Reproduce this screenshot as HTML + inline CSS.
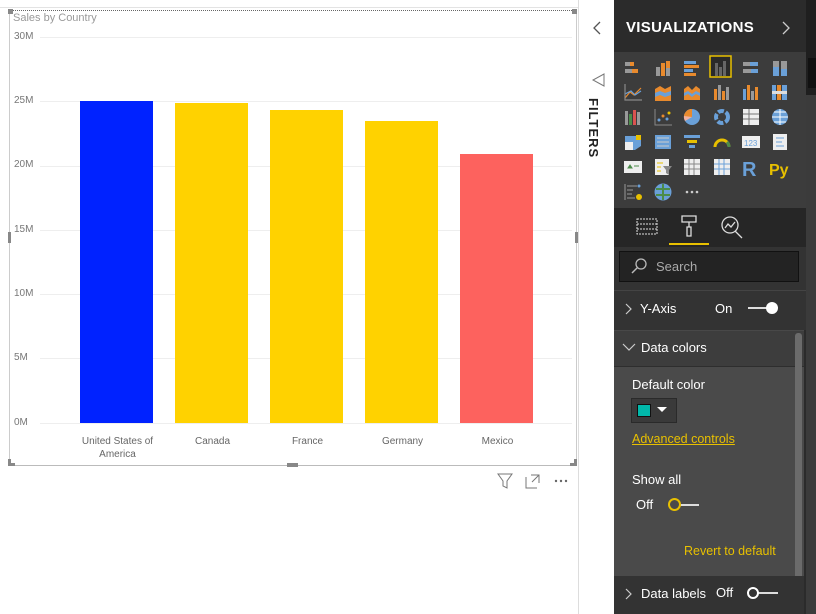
<!DOCTYPE html>
<html><head><style>
*{margin:0;padding:0;box-sizing:border-box}
body{width:816px;height:614px;position:relative;background:#fff;font-family:"Liberation Sans",sans-serif;overflow:hidden}
.a{position:absolute}
.yl{position:absolute;left:14px;font-size:10px;color:#777}
.gl{position:absolute;left:40px;width:532px;height:1px;background:#eee}
.bar{position:absolute;width:73px}
.xl{position:absolute;font-size:10px;color:#666;text-align:center;width:95px;line-height:13px}
.ic{position:absolute;width:18px;height:18px}
.pt{color:#fff;font-size:13px;position:absolute}
</style></head><body>
<div class="a" style="left:0;top:7px;width:578px;height:0;border-top:1px solid #e3e3e3"></div>
<div class="a" style="left:9px;top:10px;width:567px;height:0;border-top:1px dotted #666"></div>
<div class="a" style="left:9px;top:10px;width:1px;height:455px;background:#ccc"></div>
<div class="a" style="left:576px;top:10px;width:1px;height:455px;background:#ccc"></div>
<div class="a" style="left:9px;top:465px;width:568px;height:1px;background:#bbb"></div>
<div class="a" style="left:578px;top:0;width:1px;height:614px;background:#ddd"></div>
<div class="a" style="left:8px;top:9px;width:5px;height:5px;background:#888"></div>
<div class="a" style="left:572px;top:9px;width:5px;height:5px;background:#888"></div>
<div class="a" style="left:8px;top:459px;width:3px;height:7px;background:#888"></div><div class="a" style="left:8px;top:463px;width:7px;height:3px;background:#888"></div>
<div class="a" style="left:574px;top:459px;width:3px;height:7px;background:#888"></div><div class="a" style="left:570px;top:463px;width:7px;height:3px;background:#888"></div>
<div class="a" style="left:287px;top:463px;width:11px;height:4px;background:#888"></div>
<div class="a" style="left:8px;top:232px;width:3px;height:11px;background:#888"></div>
<div class="a" style="left:575px;top:232px;width:3px;height:11px;background:#888"></div>
<div class="a" style="left:13px;top:12px;font-size:11px;color:#999">Sales by Country</div>
<div class="yl" style="top:31px">30M</div><div class="gl" style="top:37px"></div>
<div class="yl" style="top:95px">25M</div><div class="gl" style="top:101px"></div>
<div class="yl" style="top:159px">20M</div><div class="gl" style="top:166px"></div>
<div class="yl" style="top:224px">15M</div><div class="gl" style="top:230px"></div>
<div class="yl" style="top:288px">10M</div><div class="gl" style="top:294px"></div>
<div class="yl" style="top:352px">5M</div><div class="gl" style="top:358px"></div>
<div class="yl" style="top:417px">0M</div><div class="gl" style="top:423px"></div>
<div class="bar" style="left:80px;top:101px;height:322px;background:#0022ff"></div>
<div class="bar" style="left:175px;top:103px;height:320px;background:#ffd200"></div>
<div class="bar" style="left:270px;top:110px;height:313px;background:#ffd200"></div>
<div class="bar" style="left:365px;top:121px;height:302px;background:#ffd200"></div>
<div class="bar" style="left:460px;top:154px;height:269px;background:#fd625e"></div>
<div class="xl" style="left:70px;top:435px">United States of America</div>
<div class="xl" style="left:165px;top:435px">Canada</div>
<div class="xl" style="left:260px;top:435px">France</div>
<div class="xl" style="left:355px;top:435px">Germany</div>
<div class="xl" style="left:450px;top:435px">Mexico</div>
<svg class="a" style="left:496px;top:472px" width="80" height="18"><path d="M2 2h14l-5 7v7l-4-2v-5z" fill="none" stroke="#777"/><path d="M30 5v11h11M35 3h8v8M43 3l-7 7" fill="none" stroke="#777"/><circle cx="60" cy="9" r="1.2" fill="#666"/><circle cx="65" cy="9" r="1.2" fill="#666"/><circle cx="70" cy="9" r="1.2" fill="#666"/></svg>
<svg class="a" style="left:590px;top:20px" width="16" height="16"><path d="M10 2l-6 6 6 6" fill="none" stroke="#555" stroke-width="1.3"/></svg>
<svg class="a" style="left:590px;top:72px" width="16" height="16"><path d="M14 2v12L3 8z" fill="none" stroke="#777"/></svg>
<div class="a" style="left:586px;top:98px;font-size:13px;font-weight:bold;color:#222;writing-mode:vertical-rl;letter-spacing:1px">FILTERS</div>
<div class="a" style="left:614px;top:0;width:192px;height:614px;background:#2b2b2b"></div>
<div class="a" style="left:806px;top:0;width:10px;height:614px;background:#1f1f1f"></div>
<div class="a" style="left:808px;top:58px;width:8px;height:30px;background:#111"></div>
<div class="a" style="left:806px;top:95px;width:10px;height:519px;background:#3b3b3b"></div>
<div class="a" style="left:626px;top:19px;color:#fff;font-size:15px;font-weight:bold;letter-spacing:.3px">VISUALIZATIONS</div>
<svg class="a" style="left:780px;top:20px" width="12" height="16"><path d="M3 2l6 6-6 6" fill="none" stroke="#ccc" stroke-width="1.3"/></svg>
<div class="a" style="left:614px;top:52px;width:192px;height:156px;background:#3c3c3c"></div>
<div class="a" style="left:614px;top:208px;width:192px;height:39px;background:#262626"></div>
<div class="a" style="left:614px;top:247px;width:192px;height:83px;background:#333"></div>
<div class="a" style="left:619px;top:251px;width:180px;height:31px;background:#232323;border:1px solid #111"></div>
<svg class="a" style="left:630px;top:257px" width="18" height="18"><circle cx="11" cy="7" r="5" fill="none" stroke="#bbb" stroke-width="1.3"/><path d="M7 11l-5 5" stroke="#bbb" stroke-width="1.5"/></svg>
<div class="a" style="left:656px;top:259px;color:#aaa;font-size:13px">Search</div>
<div class="a" style="left:614px;top:290px;width:192px;height:1px;background:#444"></div>
<svg class="a" style="left:624px;top:302px" width="10" height="14"><path d="M2 2l5 5-5 5" fill="none" stroke="#ccc" stroke-width="1.2"/></svg>
<div class="pt" style="left:640px;top:301px">Y-Axis</div>
<div class="pt" style="left:715px;top:301px">On</div>
<div class="a" style="left:748px;top:307px;width:22px;height:2px;background:#ddd"></div>
<div class="a" style="left:766px;top:302px;width:12px;height:12px;border-radius:50%;background:#fff"></div>
<div class="a" style="left:614px;top:330px;width:190px;height:37px;background:#3d3d3d;border-top:1px solid #484848;border-bottom:1px solid #2e2e2e"></div>
<svg class="a" style="left:622px;top:342px" width="14" height="10"><path d="M1 2l6 6 6-6" fill="none" stroke="#ccc" stroke-width="1.2"/></svg>
<div class="pt" style="left:641px;top:340px">Data colors</div>
<div class="a" style="left:614px;top:367px;width:190px;height:209px;background:#4a4a4a"></div>
<div class="pt" style="left:632px;top:377px">Default color</div>
<div class="a" style="left:631px;top:398px;width:46px;height:25px;background:#3a3a3a;border:1px solid #2a2a2a"></div>
<div class="a" style="left:637px;top:404px;width:14px;height:13px;background:#01b8aa;border:1px solid #111"></div>
<svg class="a" style="left:657px;top:407px" width="10" height="6"><path d="M0 0h10L5 5z" fill="#fff"/></svg>
<div class="a" style="left:632px;top:432px;color:#e8c000;font-size:12.5px;text-decoration:underline">Advanced controls</div>
<div class="pt" style="left:632px;top:472px">Show all</div>
<div class="pt" style="left:636px;top:497px">Off</div>
<div class="a" style="left:677px;top:504px;width:22px;height:2px;background:#ddd"></div>
<div class="a" style="left:668px;top:498px;width:13px;height:13px;border-radius:50%;border:2px solid #e8c000;background:#4a4a4a"></div>
<div class="a" style="left:684px;top:544px;color:#e8c000;font-size:12.5px">Revert to default</div>
<div class="a" style="left:795px;top:333px;width:7px;height:262px;background:#6b6b6b;border-radius:3px"></div>
<div class="a" style="left:614px;top:576px;width:190px;height:38px;background:#333"></div>
<svg class="a" style="left:624px;top:587px" width="10" height="14"><path d="M2 2l5 5-5 5" fill="none" stroke="#ccc" stroke-width="1.2"/></svg>
<div class="pt" style="left:641px;top:586px">Data labels</div>
<div class="pt" style="left:716px;top:585px">Off</div>
<div class="a" style="left:755px;top:592px;width:23px;height:2px;background:#ddd"></div>
<div class="a" style="left:747px;top:587px;width:12px;height:12px;border-radius:50%;border:2px solid #fff;background:#333"></div>
<!-- tabs -->
<svg class="a" style="left:636px;top:216px" width="24" height="22"><g fill="none" stroke="#ddd" stroke-dasharray="2 1"><rect x="1" y="3" width="20" height="15"/><path d="M1 8h20M1 13h20"/></g></svg>
<svg class="a" style="left:679px;top:213px" width="22" height="26"><path d="M3 3h14v6H3zM10 9v5M8 14h4v9H8z" fill="none" stroke="#ddd" stroke-width="1.3"/></svg>
<div class="a" style="left:669px;top:243px;width:40px;height:2px;background:#e8c000"></div>
<svg class="a" style="left:719px;top:214px" width="26" height="26"><circle cx="11" cy="11" r="8" fill="none" stroke="#ddd" stroke-width="1.3"/><path d="M16 17l7 7M6 14l3-4 3 3 4-5" fill="none" stroke="#ddd" stroke-width="1.3"/></svg>
<!-- icon grid -->
<div id="g"></div>
<svg class="a" style="left:614px;top:52px" width="192" height="156">
<g transform="translate(10,7)"><rect x="1" y="3" width="9" height="4" fill="#e88a2d"/><rect x="1" y="10" width="13" height="4" fill="#e88a2d"/><rect x="1" y="3" width="5" height="4" fill="#999"/><rect x="1" y="10" width="7" height="4" fill="#999"/></g>
<g transform="translate(40,7)"><rect x="2" y="8" width="4" height="9" fill="#999"/><rect x="7" y="4" width="4" height="13" fill="#e88a2d"/><rect x="12" y="2" width="4" height="15" fill="#999"/><rect x="12" y="2" width="4" height="7" fill="#e88a2d"/></g>
<g transform="translate(69,7)"><rect x="1" y="2" width="12" height="3" fill="#6aa0d8"/><rect x="1" y="6" width="15" height="3" fill="#e88a2d"/><rect x="1" y="10" width="9" height="3" fill="#6aa0d8"/><rect x="1" y="14" width="12" height="3" fill="#e88a2d"/></g>
<rect x="96" y="4" width="21" height="21" fill="#2a2a2a" stroke="#e8c000" stroke-width="1.5"/><g transform="translate(99,7)" fill="#666"><rect x="2" y="4" width="3" height="13"/><rect x="6" y="8" width="3" height="9"/><rect x="10" y="2" width="3" height="15"/></g>
<g transform="translate(128,7)"><rect x="1" y="3" width="15" height="4" fill="#6aa0d8"/><rect x="1" y="10" width="15" height="4" fill="#6aa0d8"/><rect x="1" y="3" width="7" height="4" fill="#999"/><rect x="1" y="10" width="8" height="4" fill="#999"/></g>
<g transform="translate(157,7)"><rect x="2" y="2" width="6" height="15" fill="#6aa0d8"/><rect x="10" y="2" width="6" height="15" fill="#6aa0d8"/><rect x="2" y="2" width="6" height="6" fill="#999"/><rect x="10" y="2" width="6" height="8" fill="#999"/></g>
<g transform="translate(10,31)" fill="none" stroke-width="1.2"><path d="M1 15l5-6 4 3 7-7" stroke="#e88a2d"/><path d="M1 11l6-3 4 4 6-4" stroke="#6aa0d8"/><path d="M1 1v16h17" stroke="#888"/></g>
<g transform="translate(40,31)"><path d="M1 6l5-3 5 3 6-3v15H1z" fill="#e88a2d"/><path d="M1 10l5-2 5 2 6-2v4l-6 2-5-2-5 2z" fill="#6aa0d8"/></g>
<g transform="translate(69,31)"><path d="M1 6l4-3 4 4 4-4 4 3v11H1z" fill="#e88a2d"/><path d="M1 10l4-2 4 3 4-3 4 2v3l-4-2-4 3-4-3-4 2z" fill="#6aa0d8"/></g>
<g transform="translate(99,31)" fill="#e88a2d"><rect x="1" y="6" width="3" height="11"/><rect x="5" y="2" width="3" height="15" fill="#999"/><rect x="9" y="8" width="3" height="9"/><rect x="13" y="4" width="3" height="13" fill="#999"/></g>
<g transform="translate(128,31)"><rect x="1" y="6" width="3" height="11" fill="#6aa0d8"/><rect x="5" y="2" width="3" height="15" fill="#e88a2d"/><rect x="9" y="8" width="3" height="9" fill="#999"/><rect x="13" y="4" width="3" height="13" fill="#e88a2d"/></g>
<g transform="translate(157,31)"><rect x="1" y="2" width="4" height="15" fill="#6aa0d8"/><rect x="6" y="2" width="4" height="15" fill="#e88a2d"/><rect x="11" y="2" width="5" height="15" fill="#6aa0d8"/><rect x="1" y="8" width="15" height="3" fill="#ddd"/></g>
<g transform="translate(10,56)"><rect x="1" y="3" width="3" height="14" fill="#999"/><rect x="5" y="6" width="3" height="11" fill="#4c8c4a"/><rect x="9" y="2" width="3" height="15" fill="#d9534f"/><rect x="13" y="4" width="3" height="13" fill="#999"/></g>
<g transform="translate(40,56)"><path d="M1 1v16h17" stroke="#888" fill="none"/><circle cx="5" cy="12" r="1.5" fill="#6aa0d8"/><circle cx="9" cy="8" r="1.5" fill="#e88a2d"/><circle cx="13" cy="11" r="1.5" fill="#6aa0d8"/><circle cx="15" cy="5" r="1.5" fill="#e8c000"/></g>
<g transform="translate(69,56)"><circle cx="9" cy="9" r="8" fill="#6aa0d8"/><path d="M9 9V1A8 8 0 0 0 2 13z" fill="#f0b0a0"/><path d="M9 9V1A8 8 0 0 0 1 8z" fill="#e88a2d"/></g>
<g transform="translate(99,56)"><circle cx="9" cy="9" r="6" fill="none" stroke="#6aa0d8" stroke-width="4" stroke-dasharray="6 2"/></g>
<g transform="translate(128,56)"><rect x="1" y="1" width="16" height="16" fill="#eee"/><path d="M1 6h16M1 11h16M7 1v16" stroke="#777"/></g>
<g transform="translate(157,56)"><circle cx="9" cy="9" r="8" fill="#6aa0d8"/><path d="M1 9h16M9 1v16M3 4h12M3 14h12" stroke="#fff" fill="none"/></g>
<g transform="translate(10,81)"><path d="M1 3h16v10l-6 4H1z" fill="#6aa0d8"/><path d="M1 9h8v8H1z" fill="#eee"/><rect x="12" y="2" width="5" height="5" fill="#e8c000"/></g>
<g transform="translate(40,81)"><path d="M1 2h16v14H1z" fill="#6aa0d8"/><path d="M3 5h12M3 9h12M3 13h12" stroke="#ccc"/></g>
<g transform="translate(69,81)" fill="#6aa0d8"><rect x="1" y="2" width="16" height="3"/><rect x="4" y="7" width="10" height="3" fill="#e8c000"/><rect x="6" y="12" width="6" height="3"/></g>
<g transform="translate(99,81)"><path d="M2 14a7 7 0 0 1 14 0" fill="none" stroke="#e8c000" stroke-width="3"/><path d="M14 9a7 7 0 0 1 2 5" fill="none" stroke="#4c8c4a" stroke-width="3"/></g>
<g transform="translate(128,81)"><rect x="0" y="3" width="18" height="12" fill="#eee"/><text x="2" y="13" font-size="8" fill="#6aa0d8" font-family="Liberation Sans">123</text></g>
<g transform="translate(157,81)"><rect x="2" y="1" width="14" height="16" fill="#eee"/><path d="M5 5h8M5 9h6M5 13h8" stroke="#6aa0d8"/></g>
<g transform="translate(10,106)"><rect x="0" y="3" width="18" height="12" fill="#eee"/><path d="M4 10l2-3 2 3zM10 8h5" stroke="#4c8c4a" fill="#4c8c4a"/></g>
<g transform="translate(40,106)"><rect x="1" y="1" width="14" height="16" fill="#eee"/><path d="M9 8h9l-3 4v5l-3-2v-3z" fill="#888"/><path d="M3 5h6M3 9h4M3 13h4" stroke="#e8c000"/></g>
<g transform="translate(69,106)"><rect x="1" y="1" width="16" height="16" fill="#eee"/><path d="M1 6h16M1 11h16M6 1v16M11 1v16" stroke="#888"/></g>
<g transform="translate(99,106)"><rect x="1" y="1" width="16" height="16" fill="#eee"/><path d="M1 6h16M1 11h16M6 1v16M11 1v16" stroke="#6aa0d8"/></g>
<text x="128" y="124" font-size="20" font-weight="bold" fill="#6aa0d8" font-family="Liberation Sans">R</text>
<text x="155" y="123" font-size="16" font-weight="bold" fill="#e8c000" font-family="Liberation Sans">Py</text>
<g transform="translate(10,131)"><path d="M1 1v16M3 3h10M3 7h6M3 11h5M3 15h8" stroke="#999"/><circle cx="15" cy="14" r="3" fill="#e8c000"/><circle cx="15" cy="3" r="1.5" fill="#6aa0d8"/></g>
<g transform="translate(40,131)"><circle cx="9" cy="9" r="8.5" fill="#6aa0d8"/><path d="M2 6h14M2 12h14M9 1v16" stroke="#4c8c4a" stroke-width="2"/></g>
<g fill="#ccc"><circle cx="73" cy="140" r="1.3"/><circle cx="78" cy="140" r="1.3"/><circle cx="83" cy="140" r="1.3"/></g>
</svg>
</body></html>
